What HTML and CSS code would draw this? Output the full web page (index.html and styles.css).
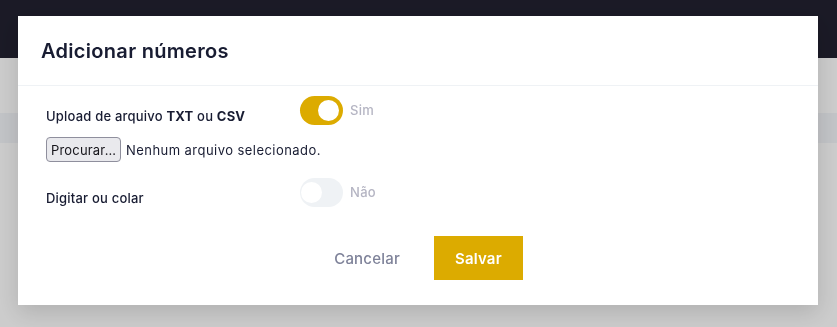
FILE: index.html
```html
<!DOCTYPE html>
<html lang="pt-BR">
<head>
<meta charset="utf-8">
<title>Adicionar números</title>
<link rel="stylesheet" href="styles.css">
</head>
<body>
<div class="page">
  <div class="topbar"></div>
  <div class="content">
    <div class="band"></div>
  </div>
</div>
<div class="backdrop"></div>
<div class="modal">
  <div class="modal-header">
    <h2 class="modal-title">Adicionar números</h2>
  </div>
  <div class="modal-body">
    <div class="row">
      <div class="label">Upload de arquivo <b>TXT</b> ou <b>CSV</b></div>
      <div class="switch">
        <span class="track on"><span class="knob"></span></span>
        <span class="switch-text">Sim</span>
      </div>
    </div>
    <div class="file">
      <span class="file-btn">Procurar…</span>
      <span class="file-name">Nenhum arquivo selecionado.</span>
    </div>
    <div class="row row-2">
      <div class="label">Digitar ou colar</div>
      <div class="switch">
        <span class="track off"><span class="knob"></span></span>
        <span class="switch-text">Não</span>
      </div>
    </div>
  </div>
  <div class="modal-footer">
    <button class="btn btn-light">Cancelar</button>
    <button class="btn btn-primary">Salvar</button>
  </div>
</div>
</body>
</html>
```
FILE: styles.css
```css
html, body {
  margin: 0;
  padding: 0;
}
body {
  width: 837px;
  height: 327px;
  overflow: hidden;
  font-family: Inter, "Noto Sans", sans-serif;
  color: #181c32;
  background: #ffffff;
}
.page {
  display: flex;
  flex-direction: column;
  height: 327px;
}
.topbar {
  height: 58px;
  background: #222130;
}
.content {
  flex: 1;
  padding-top: 55px;
  background: #ffffff;
}
.band {
  height: 30px;
  background: #f3f5f9;
}
.backdrop {
  position: fixed;
  inset: 0;
  background: rgba(0, 0, 0, 0.2);
}
.modal {
  position: fixed;
  top: 16px;
  left: 18px;
  width: 800px;
  height: 289px;
  background: #ffffff;
  box-shadow: 0 8px 22px rgba(0, 0, 0, 0.14);
  display: flex;
  flex-direction: column;
}
.modal-header {
  height: 70px;
  flex: none;
  display: flex;
  align-items: center;
  padding-left: 23px;
  padding-top: 1px;
  box-sizing: border-box;
  border-bottom: 1px solid #eff2f5;
}
.modal-title {
  margin: 0;
  font-size: 20px;
  font-weight: 600;
  color: #181c32;
  letter-spacing: 0.3px;
}
.modal-body {
  padding: 10px 28px 0 28px;
}
.row {
  display: grid;
  grid-template-columns: 254px auto;
  align-items: start;
}
.label {
  margin-top: 10px;
  line-height: 20px;
  font-size: 13px;
  font-weight: 500;
  letter-spacing: 0.2px;
  color: #181c32;
}
.label b {
  font-weight: 700;
}
.switch {
  display: flex;
  align-items: center;
  gap: 7px;
}
.track {
  width: 43px;
  height: 29px;
  border-radius: 15px;
  display: flex;
  align-items: center;
  box-sizing: border-box;
}
.track.on {
  background: #dcab00;
  justify-content: flex-end;
  padding-right: 4px;
}
.track.off {
  background: #eff2f5;
  justify-content: flex-start;
  padding-left: 1px;
}
.knob {
  width: 21px;
  height: 21px;
  border-radius: 50%;
  background: #ffffff;
}
.switch-text {
  font-size: 13px;
  font-weight: 500;
  letter-spacing: 0.3px;
  color: #b5b5c3;
  margin-top: -2px;
}
.file {
  display: flex;
  align-items: center;
  margin-top: 11px;
  gap: 5px;
}
.file-btn {
  box-sizing: border-box;
  height: 25px;
  width: 75px;
  display: flex;
  align-items: center;
  justify-content: center;
  background: #e9e9ed;
  border: 1px solid #8f8f9d;
  border-radius: 4px;
  font-size: 13px;
  letter-spacing: 0.2px;
  color: #15141a;
}
.file-name {
  font-size: 13px;
  letter-spacing: 0.45px;
  color: #181c32;
}
.row-2 {
  margin-top: 16px;
}
.modal-footer {
  margin-top: 28px;
  display: flex;
  justify-content: center;
  gap: 13px;
}
.btn {
  font-family: inherit;
  height: 44px;
  border: 0;
  padding: 0 21px;
  font-size: 15px;
  font-weight: 600;
  letter-spacing: 0.2px;
  border-radius: 0;
  cursor: pointer;
}
.btn-light {
  background: #ffffff;
  color: #7e8299;
  font-weight: 500;
}
.btn-primary {
  background: #dcab00;
  color: #ffffff;
}
```
